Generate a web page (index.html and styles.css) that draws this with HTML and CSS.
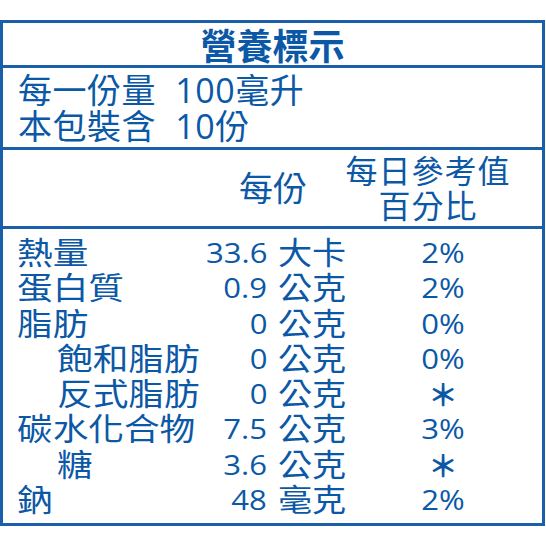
FILE: index.html
```html
<!DOCTYPE html>
<html lang="zh-Hant">
<head>
<meta charset="utf-8">
<link rel="stylesheet" href="styles.css">
</head>
<body>
<div class="label">
  <div class="title">營養標示</div>
  <div class="serving">
    <div>每一份量 100毫升</div>
    <div>本包裝含 10份</div>
  </div>
  <div class="head">
    <div class="h-per">每份</div>
    <div class="h-dv">每日參考值<br>百分比</div>
  </div>
  <div class="rows">
    <div class="name"><span class="t">熱量</span></div><div class="num"><span class="t">33.6</span></div><div class="unit"><span class="t">大卡</span></div><div class="pct"><span class="t">2%</span></div>
    <div class="name"><span class="t">蛋白質</span></div><div class="num"><span class="t">0.9</span></div><div class="unit"><span class="t">公克</span></div><div class="pct"><span class="t">2%</span></div>
    <div class="name"><span class="t">脂肪</span></div><div class="num"><span class="t">0</span></div><div class="unit"><span class="t">公克</span></div><div class="pct"><span class="t">0%</span></div>
    <div class="name sub"><span class="t">飽和脂肪</span></div><div class="num"><span class="t">0</span></div><div class="unit"><span class="t">公克</span></div><div class="pct"><span class="t">0%</span></div>
    <div class="name sub"><span class="t">反式脂肪</span></div><div class="num"><span class="t">0</span></div><div class="unit"><span class="t">公克</span></div><div class="pct"><span class="star">＊</span></div>
    <div class="name"><span class="t">碳水化合物</span></div><div class="num"><span class="t">7.5</span></div><div class="unit"><span class="t">公克</span></div><div class="pct"><span class="t">3%</span></div>
    <div class="name sub"><span class="t">糖</span></div><div class="num"><span class="t">3.6</span></div><div class="unit"><span class="t">公克</span></div><div class="pct"><span class="star">＊</span></div>
    <div class="name"><span class="t">鈉</span></div><div class="num"><span class="t">48</span></div><div class="unit"><span class="t">毫克</span></div><div class="pct"><span class="t">2%</span></div>
  </div>
</div>
</body>
</html>
```

FILE: styles.css
```css
html, body {
  margin: 0;
  padding: 0;
  background: #ffffff;
}
body {
  font-family: "Open Sans", "Noto Sans CJK TC", sans-serif;
  color: #0b58a6;
}
.label {
  margin-top: 20px;
  width: 545px;
  height: 506px;
  box-sizing: border-box;
  border: 3px solid #1b5faa;
  display: flex;
  flex-direction: column;
}
.title {
  height: 45px;
  box-sizing: border-box;
  border-bottom: 3px solid #1b5faa;
  text-align: center;
  font-family: "Noto Sans CJK TC", sans-serif;
  font-size: 36px;
  font-weight: 700;
  line-height: 42px;
}
.serving {
  height: 82px;
  box-sizing: border-box;
  border-bottom: 3px solid #1b5faa;
  padding: 4px 0 0 15px;
  font-size: 34px;
  line-height: 36px;
  word-spacing: 10px;
  letter-spacing: 0.5px;
}
.head {
  height: 79px;
  box-sizing: border-box;
  border-bottom: 3px solid #1b5faa;
  display: flex;
  justify-content: flex-end;
  align-items: center;
  padding-right: 24px;
}
.h-per {
  margin-right: 31px;
  font-size: 34px;
  line-height: 36px;
}
.h-dv {
  width: 180px;
  text-align: center;
  font-size: 32px;
  line-height: 35px;
  letter-spacing: 1px;
}
.rows {
  flex: 1;
  display: grid;
  grid-template-columns: 207px 57px 113px 126px;
  grid-auto-rows: 35.3px;
  padding-top: 6px;
  font-size: 27px;
  line-height: 35.3px;
}
.t {
  display: inline-block;
  transform: scaleX(1.15);
  white-space: nowrap;
}
.name {
  padding-left: 14px;
  font-size: 31px;
  white-space: nowrap;
}
.name .t,
.unit .t {
  transform-origin: left center;
}
.name.sub {
  padding-left: 54px;
}
.num {
  text-align: right;
}
.num .t {
  transform-origin: right center;
}
.unit {
  padding-left: 11px;
  font-size: 31px;
}
.unit .t {
  transform: scaleX(1.1);
}
.pct {
  text-align: center;
}
.star {
  font-family: "Noto Sans CJK TC", sans-serif;
  font-size: 30px;
  font-weight: 700;
}
```
